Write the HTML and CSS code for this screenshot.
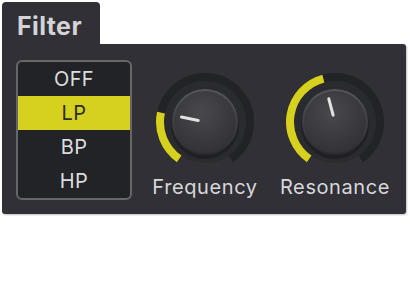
FILE: index.html
```html
<!DOCTYPE html>
<html lang="en">
<head>
  <meta charset="UTF-8">
  <title>Filter</title>
  <link rel="stylesheet" href="styles.css">
</head>
<body>

<div class="module">
  <div class="tab">Filter</div>
  <div class="panel">
    <div class="selector">
      <div class="opt">OFF</div>
      <div class="opt active">LP</div>
      <div class="opt">BP</div>
      <div class="opt">HP</div>
    </div>

    <div class="knob">
      <svg width="100" height="100" viewBox="0 0 100 100">
        <defs>
          <linearGradient id="cap" x1="0" y1="0" x2="0" y2="1">
            <stop offset="0" stop-color="#56565b"/>
            <stop offset="1" stop-color="#2b2b2f"/>
          </linearGradient>
          <radialGradient id="face" cx="0.45" cy="0.35" r="0.7">
            <stop offset="0" stop-color="#48484d"/>
            <stop offset="1" stop-color="#313135"/>
          </radialGradient>
        </defs>
        <circle cx="50" cy="50" r="41" fill="#2a2b2f"/>
        <path class="track" d="M24.19 86.86 A45 45 0 1 1 75.81 86.86"/>
        <path class="value" d="M24.19 86.86 A45 45 0 0 1 5.98 40.64"/>
        <circle cx="50" cy="53" r="34" fill="#1c1c1f" opacity="0.7"/>
        <circle cx="50" cy="50" r="33" fill="url(#cap)"/>
        <circle cx="50" cy="50" r="31" fill="url(#face)"/>
        <line class="pointer" x1="43.2" y1="48.5" x2="26.5" y2="45"/>
      </svg>
      <div class="label">Frequency</div>
    </div>

    <div class="knob">
      <svg width="100" height="100" viewBox="0 0 100 100">
        <circle cx="50" cy="50" r="41" fill="#2a2b2f"/>
        <path class="track" d="M24.19 86.86 A45 45 0 1 1 75.81 86.86"/>
        <path class="value" d="M24.19 86.86 A45 45 0 0 1 38.35 6.53"/>
        <circle cx="50" cy="53" r="34" fill="#1c1c1f" opacity="0.7"/>
        <circle cx="50" cy="50" r="33" fill="url(#cap)"/>
        <circle cx="50" cy="50" r="31" fill="url(#face)"/>
        <line class="pointer" x1="48.1" y1="43.2" x2="43.8" y2="26.8"/>
      </svg>
      <div class="label">Resonance</div>
    </div>
  </div>
</div>

</body>
</html>
```

FILE: styles.css
```css
body{
  margin: 0;
  background: #fff;
  font-family: Inter, "Noto Sans", sans-serif;
}
.module{
  padding: 2px;
}
.tab{
  box-sizing: border-box;
  width: 98px;
  height: 42px;
  padding: 9px 0 0 15px;
  background: #303036;
  border-radius: 4px 4px 0 0;
  color: #d4d4d6;
  font-size: 25px;
  font-weight: 700;
  letter-spacing: 0.4px;
  line-height: 30px;
}
.panel{
  display: flex;
  align-items: flex-start;
  width: 404px;
  height: 170px;
  box-sizing: border-box;
  padding: 16px 0 0 14px;
  background: #303036;
  border-radius: 0 3px 3px 3px;
  box-shadow: 1px 1px 2px rgba(0,0,0,.25);
}
.selector{
  width: 116px;
  height: 140px;
  box-sizing: border-box;
  border: 2px solid #66676c;
  border-radius: 6px;
  background: #222327;
  overflow: hidden;
}
.opt{
  height: 34px;
  line-height: 34px;
  text-align: center;
  color: #dcdcde;
  font-size: 20px;
  letter-spacing: 0.4px;
}
.opt.active{
  background: #d6d01e;
  color: #2c2c2c;
}
.knob{
  display: flex;
  flex-direction: column;
  align-items: center;
  width: 100px;
  margin-top: 12px;
  margin-left: 23px;
}
.knob + .knob{
  margin-left: 30px;
}
.knob svg{
  display: block;
}
.track{
  fill: none;
  stroke: #222327;
  stroke-width: 8;
}
.value{
  fill: none;
  stroke: #d6d01e;
  stroke-width: 8;
}
.pointer{
  stroke: #e2e2e2;
  stroke-width: 3;
  stroke-linecap: round;
}
.label{
  margin-top: 3px;
  color: #d8d8da;
  font-size: 20px;
  letter-spacing: 0.6px;
  line-height: 24px;
  white-space: nowrap;
}
```
